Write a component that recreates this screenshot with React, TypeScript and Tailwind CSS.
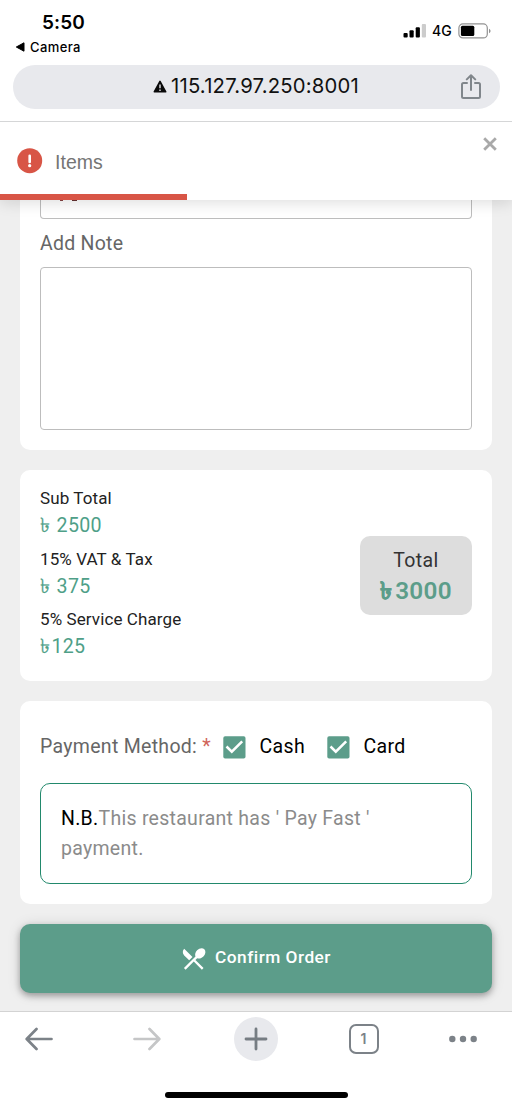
import React from "react";

function StatusBar() {
  return (
    <div className="flex h-[65px] justify-between pl-[15px] pr-[20px] font-['Inter',sans-serif] text-black">
      <div>
        <div className="mt-[11px] pl-[27px] text-[19px] font-semibold leading-6 tracking-[0.1px]">5:50</div>
        <div className="mt-[4px] flex items-center gap-[5px] text-[13px] font-medium leading-4 tracking-[0.4px]">
          <svg width="10" height="10" viewBox="0 0 10 10">
            <path d="M1.3 5 9 .8v8.4z" fill="#000" stroke="#000" strokeWidth="1" strokeLinejoin="round" />
          </svg>
          <span>Camera</span>
        </div>
      </div>
      <div className="mt-[22px] flex h-[18px] items-center">
        <svg width="24" height="16" viewBox="0 0 24 16">
          <rect x=".5" y="10" width="4.2" height="4.5" rx="1" />
          <rect x="6.5" y="7.3" width="4.2" height="7.2" rx="1" />
          <rect x="12.7" y="4.3" width="4.2" height="10.2" rx="1" />
          <rect x="18.8" y="1" width="4.2" height="13.5" rx="1" fill="#ccc" />
        </svg>
        <span className="ml-[5px] w-[22px] text-[14px] font-medium leading-4">4G</span>
        <svg className="ml-1" width="34" height="16" viewBox="0 0 34 16">
          <rect x=".9" y=".9" width="28.4" height="14" rx="4" fill="none" stroke="#929292" strokeWidth="1.2" />
          <rect x="2.9" y="2.7" width="13.4" height="10.4" rx="1.5" />
          <path d="M31 5.7c2 .8 2 3.7 0 4.5z" fill="#929292" />
        </svg>
      </div>
    </div>
  );
}

function AddressBar() {
  return (
    <div className="h-[57px] border-b border-[#d5d6d7] px-[12.5px]">
      <div className="flex h-[43.5px] items-center rounded-full bg-[#e8e9ed] pl-[140.5px] pr-[17.5px] font-['Inter',sans-serif]">
        <svg className="-mt-px" width="14" height="13" viewBox="0 0 14 13">
          <path d="M7 1.4 12.7 11.8H1.3z" fill="#0a0a0a" stroke="#0a0a0a" strokeWidth="1.6" strokeLinejoin="round" />
          <path d="M7 4.5v3.8M7 9.4v1.5" stroke="#e8e9ed" strokeWidth="1.4" />
        </svg>
        <span className="-mt-0.5 ml-1 flex-1 whitespace-nowrap text-[20.3px] leading-6 tracking-[0.19px] text-[#111]">115.127.97.250:8001</span>
        <svg width="22" height="26" viewBox="0 0 22 26" fill="none" stroke="#80868b" strokeWidth="2" strokeLinecap="round" strokeLinejoin="round">
          <path d="M7 9H3.5A1.5 1.5 0 0 0 2 10.5v12A1.5 1.5 0 0 0 3.5 24h15a1.5 1.5 0 0 0 1.5-1.5v-12A1.5 1.5 0 0 0 18.5 9H15" />
          <path d="M11 16V1.5M6.8 5.4 11 1.2l4.2 4.2" />
        </svg>
      </div>
    </div>
  );
}

function Toast() {
  return (
    <div className="relative z-10 flex h-[78px] flex-col justify-between bg-white shadow-[0_3px_14px_rgba(0,0,0,0.13)] [clip-path:inset(0_0_-30px_0)]">
      <div className="flex justify-between pl-[17px] pr-[15px]">
        <div className="mt-[26px] flex items-center">
          <svg width="26" height="26" viewBox="0 0 26 26">
            <circle cx="12.7" cy="12.7" r="12.5" fill="#d85546" />
            <path d="M12.7 7.8v6.2" stroke="#fff" strokeWidth="2.6" strokeLinecap="round" />
            <circle cx="12.7" cy="17.7" r="1.6" fill="#fff" />
          </svg>
          <span className="mt-px ml-3 font-['Liberation_Sans',sans-serif] text-[19.5px] leading-6 tracking-[0.05px] text-[#757575]">Items</span>
        </div>
        <svg className="mt-[15px]" width="14" height="14" viewBox="0 0 14 14">
          <path d="m1.2 1.2 11.6 11.6m0-11.600-11.600 11.600" stroke="#a9a9a9" strokeWidth="2.8" />
        </svg>
      </div>
      <div className="h-1.5 w-[186.5px] bg-[#d85546]" />
    </div>
  );
}

function CheckOption({ label }: { label: string }) {
  return (
    <div className="flex items-center">
      <svg width="23" height="23" viewBox="0 0 23 23">
        <rect x=".3" y=".3" width="22.2" height="22.2" rx="1.8" fill="#5c9d8a" />
        <path d="m3.5 10.5 5.3 5.2L19.2 5.3" fill="none" stroke="#fff" strokeWidth="2.5" />
      </svg>
      <span className="ml-[14px] text-[19.5px] leading-6 tracking-[0.35px] text-black">{label}</span>
    </div>
  );
}

const charges = [
  { label: "Sub Total", value: " 2500" },
  { label: "15% VAT & Tax", value: " 375" },
  { label: "5% Service Charge", value: "125" },
];

function Checkout() {
  return (
    <main className="flex h-[811px] flex-col overflow-hidden bg-[#efefef] px-5 font-['Roboto',sans-serif]">
      <section className="h-[250px] shrink-0 rounded-b-[10px] bg-white px-5">
        <div className="h-[18.5px] rounded-b-[4px] border border-t-0 border-[#bdbdbd]">
          <div className="ml-[19px] flex gap-[9px]">
            <div className="h-px w-[3px] bg-[#844]" />
            <div className="h-px w-[5px] bg-[#633]" />
          </div>
        </div>
        <div className="mt-[13.5px] text-[19.5px] leading-6 tracking-[0.25px] text-[#666]">Add Note</div>
        <div className="mt-[11px] h-[163px] rounded-[4px] border border-[#bdbdbd]" />
      </section>

      <section className="mt-5 flex h-[211px] shrink-0 items-center justify-between rounded-[10px] bg-white px-5">
        <div className="flex h-full flex-col pt-[16px]">
          {charges.map((charge) => (
            <div key={charge.label} className="h-[60.6px]">
              <div className="text-[17px] leading-[25px] tracking-[0.1px] text-[#222]">{charge.label}</div>
              <div className="mt-px whitespace-pre text-[19.6px] leading-[28px] tracking-[0.3px] text-[#4f9f88]">
                <span className="tracking-[1.4px] [-webkit-text-stroke:0.2px_#4f9f88]">৳</span>
                {charge.value}
              </div>
            </div>
          ))}
        </div>
        <div className="flex h-[79px] w-28 flex-col items-center rounded-[10px] bg-[#ddd] pt-[11px]">
          <div className="text-[19.5px] leading-7 tracking-[0.4px] text-[#333]">Total</div>
          <div className="text-[24.3px] font-semibold leading-8 tracking-[0.25px] text-[#5c9d8a]">
            <span className="tracking-[3px] [-webkit-text-stroke:0.4px_#5c9d8a]">৳</span>3000
          </div>
        </div>
      </section>

      <section className="mt-5 h-[203px] shrink-0 rounded-[10px] bg-white px-5 pt-[34px]">
        <div className="flex items-center">
          <div className="w-[182.5px] whitespace-nowrap text-[19.5px] leading-6 tracking-[0.3px] text-[#666]">
            Payment Method: <span className="text-[#d0645b]">*</span>
          </div>
          <div className="flex gap-[21.5px]">
            <CheckOption label="Cash" />
            <CheckOption label="Card" />
          </div>
        </div>
        <div className="mt-6 h-[101px] rounded-[10px] border border-[#22896c] px-5 pt-5 text-[19.5px] leading-[30px] tracking-[0.28px] text-[#8b8b8b]">
          <span className="text-black">N.B.</span>This restaurant has ' Pay Fast ' payment.
        </div>
      </section>

      <button className="mt-5 flex h-[69px] shrink-0 items-center justify-center rounded-[10px] bg-[#5c9d8a] text-white shadow-[0_3px_6px_rgba(0,0,0,0.3),0_1px_14px_rgba(0,0,0,0.12)]">
        <svg width="26" height="26" viewBox="1.2 1.2 22 22" fill="currentColor">
          <path d="M8.1 13.34l2.83-2.83L3.91 3.5c-1.56 1.56-1.56 4.09 0 5.66l4.19 4.18zm6.78-1.81c1.53.71 3.68.21 5.27-1.38 1.91-1.91 2.28-4.65.81-6.12-1.46-1.46-4.2-1.1-6.12.81-1.59 1.59-2.09 3.74-1.38 5.27L3.7 19.87l1.41 1.41L12 14.41l6.88 6.88 1.41-1.41L13.41 13l1.47-1.47z" />
        </svg>
        <span className="-mt-[3px] ml-[8px] text-[17.3px] font-medium leading-6 tracking-[0.48px]">Confirm Order</span>
      </button>
    </main>
  );
}

function BrowserToolbar() {
  return (
    <nav className="flex h-[97px] flex-col items-center border-t border-[#d3d3d3] bg-white">
      <div className="mt-1 flex h-[46px] w-full items-center pl-[25px]">
        <svg width="28" height="24" viewBox="0 0 28 24" fill="none" stroke="#7c8288" strokeWidth="2.7" strokeLinecap="round" strokeLinejoin="round">
          <path d="M26.5 12H2M11.5 2 1.7 12l9.8 10" />
        </svg>
        <svg className="ml-[80px]" width="28" height="24" viewBox="0 0 28 24" fill="none" stroke="#c5c6c7" strokeWidth="2.7" strokeLinecap="round" strokeLinejoin="round">
          <path d="M1.5 12H26M16.5 2l9.8 10-9.8 10" />
        </svg>
        <div className="ml-[72.5px] flex size-[44.5px] items-center justify-center rounded-full bg-[#e8e9ed]">
          <svg width="24" height="24" viewBox="0 0 24 24" stroke="#767d83" strokeWidth="2.8" strokeLinecap="round">
            <path d="M12 2v20M2 12h20" />
          </svg>
        </div>
        <div className="ml-[70.5px] flex size-[30px] items-center justify-center rounded-[7px] border-2 border-[#7c8288] font-['Inter',sans-serif] text-[14px] font-semibold leading-4 text-[#7c8288]">1</div>
        <svg className="ml-[70.5px]" width="28" height="8" viewBox="0 0 28 8" fill="#7c8288">
          <circle cx="3.3" cy="4" r="3.2" />
          <circle cx="14" cy="4" r="3.2" />
          <circle cx="24.7" cy="4" r="3.2" />
        </svg>
      </div>
      <div className="mt-[30px] h-1.5 w-[183px] rounded-full bg-black" />
    </nav>
  );
}

export default function App() {
  return (
    <div className="flex h-[1108px] w-[512px] flex-col overflow-hidden bg-white">
      <StatusBar />
      <AddressBar />
      <Toast />
      <Checkout />
      <BrowserToolbar />
    </div>
  );
}
